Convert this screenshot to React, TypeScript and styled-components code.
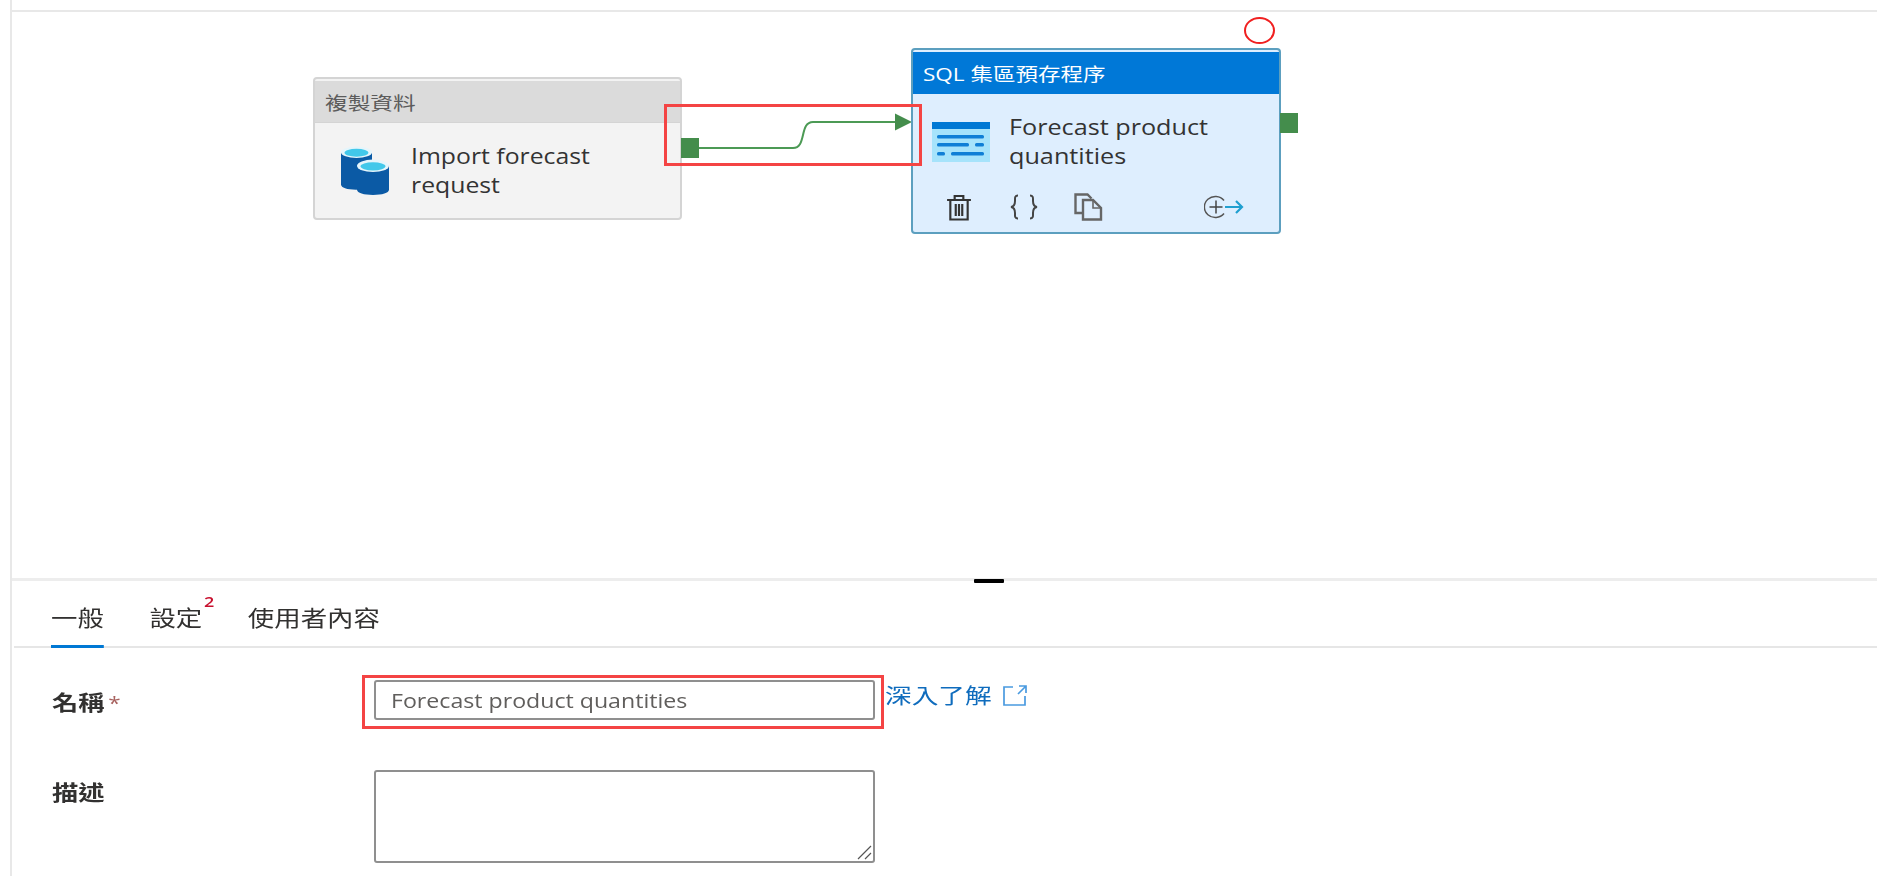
import React from "react";
import styled, { createGlobalStyle } from "styled-components";

const FONT = `"Open Sans", "Noto Sans CJK TC", sans-serif`;

const Global = createGlobalStyle`
  html, body { margin: 0; padding: 0; background: #fff; overflow: hidden; }
  body { font-family: ${FONT}; color: #323130; }
`;

const Frame = styled.div`
  width: 1877px;
  height: 876px;
  box-sizing: border-box;
  padding-left: 10px;
  display: flex;
  flex-direction: column;
  overflow: hidden;
  filter: blur(0.4px);
`;

const Shell = styled.div`
  flex: 1;
  display: flex;
  flex-direction: column;
  border-left: 2px solid #e8e8e8;
  min-height: 0;
`;

const TopEdge = styled.div`
  height: 10px;
  border-bottom: 2px solid #e8e8e8;
  margin-left: -2px;
  flex: none;
`;

const Canvas = styled.div`
  position: relative;
  height: 566px;
  flex: none;
`;

/* The source picture is stretched sideways, so its text is wider than any installed face. */
const Wide = styled.span<{ $s: number }>`
  display: inline-block;
  transform: scaleX(${p => p.$s});
  transform-origin: left center;
  white-space: nowrap;
`;

const Node = styled.div<{ $x: number; $y: number; $w: number; $h: number; $active?: boolean }>`
  position: absolute;
  left: ${p => p.$x}px;
  top: ${p => p.$y}px;
  width: ${p => p.$w}px;
  height: ${p => p.$h}px;
  box-sizing: border-box;
  border-radius: 4px;
  border: 2px solid ${p => (p.$active ? "#5c9fbf" : "#d4d4d4")};
  background: ${p => (p.$active ? "#deeefe" : "#f3f3f3")};
  display: flex;
  flex-direction: column;
  overflow: hidden;
`;

const NodeHeader = styled.div<{ $active?: boolean }>`
  margin-top: 2px;
  height: 42px;
  flex: none;
  display: flex;
  align-items: center;
  box-sizing: border-box;
  padding-left: 10px;
  font-size: 18px;
  background: ${p => (p.$active ? "#0078d7" : "#dbdbdb")};
  color: ${p => (p.$active ? "#fff" : "#5c5c5c")};
  border-bottom: 1px solid ${p => (p.$active ? "#0078d7" : "#d4d4d4")};
`;

const NodeBody = styled.div<{ $pad: number; $gap: number }>`
  display: flex;
  align-items: center;
  gap: ${p => p.$gap}px;
  padding: 19px 0 0 ${p => p.$pad}px;
`;

const NodeLabel = styled.div`
  font-size: 21px;
  line-height: 28.5px;
  color: #333;
`;

const NodeActions = styled.div`
  display: flex;
  align-items: center;
  padding: 23px 0 0 33px;
`;

const ActionSlot = styled.span<{ $w: number }>`
  display: flex;
  width: ${p => p.$w}px;
  flex: none;
`;

const Port = styled.div<{ $x: number; $y: number }>`
  position: absolute;
  left: ${p => p.$x}px;
  top: ${p => p.$y}px;
  width: 18px;
  height: 20px;
  background: #448d4c;
`;

const Wire = styled.svg`
  position: absolute;
  left: 687px;
  top: 100px;
`;

const RedBox = styled.div<{ $x: number; $y: number; $w: number; $h: number }>`
  position: absolute;
  left: ${p => p.$x}px;
  top: ${p => p.$y}px;
  width: ${p => p.$w}px;
  height: ${p => p.$h}px;
  box-sizing: border-box;
  border: 3px solid #f44444;
  pointer-events: none;
`;

const RedCircle = styled.div`
  position: absolute;
  left: 1232px;
  top: 5px;
  width: 31px;
  height: 27px;
  box-sizing: border-box;
  border: 2px solid #f02020;
  border-radius: 50%;
`;

const Panel = styled.div`
  flex: 1;
  position: relative;
  border-top: 3px solid #ededed;
  min-height: 0;
`;

const Handle = styled.div`
  position: absolute;
  left: 962px;
  top: -2px;
  width: 30px;
  height: 4px;
  background: #000;
  border-radius: 1px;
`;

const Tabs = styled.div`
  height: 67px;
  box-sizing: border-box;
  margin-left: 2px;
  padding-left: 37px;
  border-bottom: 2px solid #e6e6e6;
`;

const TabRow = styled.div`
  display: flex;
  gap: 38px;
  transform: scaleX(1.2);
  transform-origin: left top;
`;

const Tab = styled.div<{ $active?: boolean }>`
  position: relative;
  font-size: 22px;
  line-height: 30px;
  padding-top: 21px;
  height: 67px;
  box-sizing: border-box;
  color: #323130;
  border-bottom: ${p => (p.$active ? "3px solid #0078d4" : "none")};
`;

const TabBadge = styled.sup`
  position: absolute;
  right: -10px;
  top: 12px;
  font-size: 15px;
  font-weight: 600;
  line-height: 16px;
  color: #c8102e;
`;

const FormGrid = styled.div`
  display: grid;
  grid-template-columns: 322px 501px auto;
  align-items: start;
  padding: 32px 0 0 40px;
  row-gap: 50px;
`;

const FieldLabel = styled.div`
  font-size: 21px;
  font-weight: 600;
  line-height: 28px;
  padding-top: 8px;
  color: #323130;
`;

const Required = styled.span`
  color: #a8625f;
  font-size: 18px;
  font-weight: 400;
  margin-left: 3px;
`;

const InputWrap = styled.div`
  position: relative;
`;

const NameInput = styled.div`
  height: 40px;
  box-sizing: border-box;
  border: 2px solid #8f8f8f;
  border-radius: 3px;
  padding-left: 15px;
  font-size: 20px;
  line-height: 37px;
  color: #605e5c;
`;

const Description = styled.div`
  position: relative;
  height: 93px;
  box-sizing: border-box;
  border: 2px solid #8f8f8f;
  border-radius: 3px;
`;

const Grip = styled.svg`
  position: absolute;
  right: 1px;
  bottom: 1px;
`;

const LearnMore = styled.a`
  display: flex;
  align-items: center;
  gap: 34px;
  margin-left: 10px;
  font-size: 21px;
  line-height: 30px;
  color: #0f6cbd;
  text-decoration: none;
`;

const Trash = () => (
  <svg width="26" height="27" viewBox="0 0 24 27" fill="none" stroke="#333" strokeWidth="2" preserveAspectRatio="none">
    <path d="M1 6h22M8 6V2h8v4M4 6v19.500h16V6M9 10v12M12 10v12M15 10v12" />
  </svg>
);
const Braces = () => (
  <svg width="28" height="26" viewBox="0 0 28 26" fill="none" stroke="#444" strokeWidth="2">
    <path d="M8 1.500C4.500 1.500 5 4 5 7c0 3-.5 5.500-4 6 3.500.5 4 3 4 6s-.5 5.500 3 5.500M20 1.500c3.500 0 3 2.500 3 5.500 0 3 .5 5.500 4 6-3.500.5-4 3-4 6s.5 5.500-3 5.500" />
  </svg>
);
const Copy = () => (
  <svg width="29" height="28" viewBox="0 0 29 28" fill="none" stroke="#666" strokeWidth="2.400">
    <path d="M9 20H1.500V1.500h12l4 4" />
    <path d="M9 7h10l8 8v11.500H9z" />
    <path d="M19 7v8h8" strokeWidth="1.600" />
  </svg>
);
const AddNext = () => (
  <svg width="40" height="24" viewBox="0 0 40 24" fill="none">
    <path d="M20 5.500A11 10.500 0 1 0 20 18.500" stroke="#555" strokeWidth="1.500" />
    <path d="M5.500 12h13M12 5.500v13" stroke="#444" strokeWidth="1.500" />
    <path d="M21 12h17M32 6l6 6-6 6" stroke="#1f9fd0" strokeWidth="2.200" />
  </svg>
);
const Cylinders = () => (
  <svg width="48" height="49" viewBox="0 0 48 47" preserveAspectRatio="none">
    <path d="M0 6v31c0 3 6 5 15 5s16-2 16-5V6z" fill="#0b5aa5" />
    <ellipse cx="15.500" cy="6" rx="15.500" ry="5.500" fill="#e5f5fb" />
    <ellipse cx="15.500" cy="6.500" rx="12" ry="3.800" fill="#42c8ea" />
    <path d="M16 19v23c0 3 7 5 16 5s16-2 16-5V19z" fill="#0b5aa5" />
    <ellipse cx="32" cy="19" rx="16" ry="6" fill="#e5f5fb" />
    <ellipse cx="32" cy="19.500" rx="12.500" ry="4" fill="#42c8ea" />
  </svg>
);
const StoredProc = () => (
  <svg width="58" height="40" viewBox="0 0 58 40">
    <rect x="0" y="0" width="58" height="40" fill="#a6e3fb" />
    <rect x="0" y="0" width="58" height="7" fill="#0078d4" />
    <g fill="#0f7fd6">
      <rect x="5" y="13" width="47" height="3.500" rx="1.500" />
      <rect x="5" y="21" width="32" height="3.500" rx="1.500" />
      <rect x="43" y="21" width="9" height="3.500" rx="1.500" />
      <rect x="5" y="30" width="8" height="3.500" rx="1.500" />
      <rect x="19" y="30" width="33" height="3.500" rx="1.500" />
    </g>
  </svg>
);
const External = () => (
  <svg width="24" height="21" viewBox="0 0 24 21" fill="none" stroke="#4a9ae0" strokeWidth="1.700">
    <path d="M10 2H1v18h21v-9M16 1h7v7M23 1l-8 8" />
  </svg>
);

export default function App() {
  return (
    <Frame>
      <Global />
      <Shell>
        <TopEdge />
        <Canvas>
          <Node $x={301} $y={65} $w={369} $h={143}>
            <NodeHeader><Wide $s={1.26}>複製資料</Wide></NodeHeader>
            <NodeBody $pad={26} $gap={22}>
              <Cylinders />
              <NodeLabel>
                <Wide $s={1.18}>Import forecast</Wide><br />
                <Wide $s={1.18}>request</Wide>
              </NodeLabel>
            </NodeBody>
          </Node>
          <Port $x={669} $y={126} />
          <Wire width="226" height="50" viewBox="0 0 226 50" fill="none">
            <path d="M0 36h94c14 0 6-26 20-26h84" stroke="#4c9a55" strokeWidth="2" />
            <path d="M196 1.500l17 8.500-17 8.500z" fill="#448d4c" />
          </Wire>
          <Node $x={899} $y={36} $w={370} $h={186} $active>
            <NodeHeader $active><Wide $s={1.25}>SQL 集區預存程序</Wide></NodeHeader>
            <NodeBody $pad={19} $gap={19}>
              <StoredProc />
              <NodeLabel>
                <Wide $s={1.2}>Forecast product</Wide><br />
                <Wide $s={1.2}>quantities</Wide>
              </NodeLabel>
            </NodeBody>
            <NodeActions>
              <ActionSlot $w={64}><Trash /></ActionSlot>
              <ActionSlot $w={64}><Braces /></ActionSlot>
              <ActionSlot $w={130}><Copy /></ActionSlot>
              <ActionSlot $w={40}><AddNext /></ActionSlot>
            </NodeActions>
          </Node>
          <Port $x={1268} $y={101} />
          <RedBox $x={652} $y={92} $w={258} $h={62} />
          <RedCircle />
        </Canvas>
        <Panel>
          <Handle />
          <Tabs>
            <TabRow>
              <Tab $active>一般</Tab>
              <Tab>設定<TabBadge>2</TabBadge></Tab>
              <Tab>使用者內容</Tab>
            </TabRow>
          </Tabs>
          <FormGrid>
            <FieldLabel><Wide $s={1.25}>名稱<Required>*</Required></Wide></FieldLabel>
            <InputWrap>
              <NameInput><Wide $s={1.157}>Forecast product quantities</Wide></NameInput>
              <RedBox $x={-12} $y={-5} $w={522} $h={54} />
            </InputWrap>
            <LearnMore><Wide $s={1.27}>深入了解</Wide><External /></LearnMore>
            <FieldLabel><Wide $s={1.25}>描述</Wide></FieldLabel>
            <Description>
              <Grip width="16" height="16" viewBox="0 0 16 16" stroke="#555" strokeWidth="1.200">
                <path d="M2 15L15 2M9 15l6-6" />
              </Grip>
            </Description>
          </FormGrid>
        </Panel>
      </Shell>
    </Frame>
  );
}
